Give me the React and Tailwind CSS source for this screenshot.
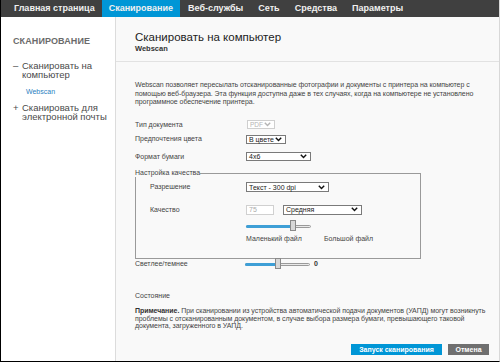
import { useState } from "react";

const font = { fontFamily: '"Liberation Sans", Arial, sans-serif' };

function FakeSelect({ value, w, h = "h-[9px]", disabled }) {
  return (
    <div
      className={`${w} ${h} flex items-center justify-between border bg-white px-[2px] ${
        disabled ? "border-[#cfcfcf] text-[#b5b5b5]" : "border-[#7a7a7a] text-[#222]"
      }`}
    >
      <span className={`${disabled ? "text-[6.5px]" : "text-[7px]"} whitespace-nowrap leading-none`}>{value}</span>
      <svg width="7" height="5" viewBox="0 0 7 5" className="ml-[1px] mr-[1px] shrink-0">
        <path
          d="M0.8 0.8 L3.5 3.6 L6.2 0.8"
          fill="none"
          stroke={disabled ? "#b5b5b5" : "#111"}
          strokeWidth="1.4"
        />
      </svg>
    </div>
  );
}

function Slider({ pos }) {
  return (
    <div className="relative h-[10px] w-[65px]">
      <div className="absolute left-0 top-[3.5px] h-[3px] w-full rounded-full border border-[#9a9a9a] bg-[#e9e9e9]" />
      <div
        className="absolute left-0 top-[3.5px] h-[3px] rounded-l-full bg-[#3e9fd6]"
        style={{ width: pos }}
      />
      <div
        className="absolute top-[-1px] h-[11px] w-[6px] border border-[#8a8a8a] bg-[#d8d8d8]"
        style={{ left: pos }}
      />
    </div>
  );
}

const tabs = ["Главная страница", "Сканирование", "Веб-службы", "Сеть", "Средства", "Параметры"];

export default function App() {
  const [active] = useState(1);
  return (
    <div
      className="flex h-[362px] w-[500px] flex-col overflow-hidden border-b border-l border-r border-b-black border-l-black border-r-[#d8d8d8] bg-white"
      style={font}
    >
      {/* top nav */}
      <div className="flex h-[17px] shrink-0 items-stretch bg-[#404040] pl-[6px]">
        {tabs.map((t, i) => (
          <div
            key={t}
            className={`flex items-center px-[7px] text-[9px] font-bold text-[#f0f0f0] ${
              i === active ? "bg-[#0096d6]" : ""
            } ${i > 1 ? "ml-[1px]" : ""}`}
          >
            {t}
          </div>
        ))}
      </div>

      <div className="flex flex-1">
        {/* sidebar */}
        <div className="w-[115px] shrink-0 border-r border-[#dcdcdc] bg-white pl-[12px] pt-[18px]">
          <div className="text-[9px] font-bold tracking-[0.1px] text-[#6b6b6b]">СКАНИРОВАНИЕ</div>
          <div className="mt-[12px] flex text-[9.5px] leading-[9.5px] text-[#4a4a4a]">
            <span className="w-[9px] shrink-0">–</span>
            <span>
              Сканировать на
              <br />
              компьютер
            </span>
          </div>
          <div className="mt-[7px] pl-[13px] text-[7px] leading-[9px] text-[#2a7fbf]">Webscan</div>
          <div className="mt-[7px] flex text-[9.5px] leading-[9.5px] text-[#4a4a4a]">
            <span className="w-[9px] shrink-0">+</span>
            <span>
              Сканировать для
              <br />
              электронной почты
            </span>
          </div>
        </div>

        {/* content */}
        <div className="flex flex-1 flex-col bg-[#f9f9f9]">
          <div className="h-[45px] shrink-0 border-b border-[#e2e2e2] pl-[19px] pt-[13px]">
            <div className="text-[11.5px] leading-[14px] text-[#222]">Сканировать на компьютер</div>
            <div className="text-[7.5px] font-bold leading-[10px] text-[#333]">Webscan</div>
          </div>

          <div className="pl-[19px] pr-[10px] text-[#444]">
            <p className="mt-[19px] whitespace-nowrap text-[7px] leading-[8.5px] tracking-[-0.05px]">
              Webscan позволяет пересылать отсканированные фотографии и документы с принтера на компьютер с
              <br />
              помощью веб-браузера. Эта функция доступна даже в тех случаях, когда на компьютере не установлено
              <br />
              программное обеспечение принтера.
            </p>

            <div className="mt-[13px] flex items-center text-[7px]">
              <span className="w-[112px]">Тип документа</span>
              <FakeSelect value="PDF" w="w-[28px]" disabled />
            </div>
            <div className="mt-[4px] flex items-center text-[7px]">
              <span className="w-[111px]">Предпочтения цвета</span>
              <FakeSelect value="В цвете" w="w-[40px]" />
            </div>
            <div className="mt-[7px] flex items-center text-[7px]">
              <span className="w-[111px]">Формат бумаги</span>
              <FakeSelect value="4x6" w="w-[65px]" />
            </div>

            <fieldset className="mt-[7px] h-[90px] w-[286px] border border-[#9a9a9a] px-0 pb-0">
              <legend className="ml-[-1px] px-0 text-[7px] leading-[8px]">Настройка качества</legend>
              <div className="mt-[5px] flex items-center text-[7px]">
                <span className="w-[110px] pl-[14px]">Разрешение</span>
                <FakeSelect value="Текст - 300 dpi" w="w-[83px]" h="h-[10px]" />
              </div>
              <div className="mt-[12px] flex items-center text-[7px]">
                <span className="w-[110px] pl-[14px]">Качество</span>
                <div className="flex h-[10px] w-[28px] items-center border border-[#d0d0d0] bg-white px-[2px] text-[7px] text-[#aaa]">
                  75
                </div>
                <div className="ml-[9px]">
                  <FakeSelect value="Средняя" w="w-[79px]" h="h-[10px]" />
                </div>
              </div>
              <div className="mt-[6px] pl-[110px]">
                <Slider pos={44} />
              </div>
              <div className="mt-[3px] flex pl-[110px] text-[7px]">
                <span className="w-[78px]">Маленький файл</span>
                <span>Большой файл</span>
              </div>
            </fieldset>

            <div className="mt-0 flex items-center text-[7px]">
              <span className="w-[110px]">Светлее/темнее</span>
              <Slider pos={30} />
              <span className="ml-[4px] text-[7px] font-bold text-[#333]">0</span>
            </div>

            <div className="mt-[21px] text-[7px]">Состояние</div>
            <p className="mt-[6px] whitespace-nowrap text-[7px] leading-[7.5px] tracking-[-0.05px]">
              <b className="text-[#333]">Примечание.</b> При сканировании из устройства автоматической подачи документов (УАПД) могут возникнуть
              <br />
              проблемы с отсканированным документом, в случае выбора размера бумаги, превышающего таковой
              <br />
              документа, загруженного в УАПД.
            </p>

            <div className="mt-[14px] flex justify-end gap-[6px]">
              <button className="h-[11px] w-[91px] bg-[#0096d6] text-[7px] font-bold leading-none text-white">
                Запуск сканирования
              </button>
              <button className="h-[11px] w-[41px] bg-[#6f6f6f] text-[7px] font-bold leading-none text-white">
                Отмена
              </button>
            </div>
          </div>
        </div>
      </div>
    </div>
  );
}
